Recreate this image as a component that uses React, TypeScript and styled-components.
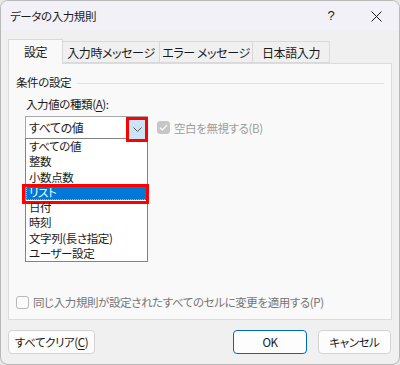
import React from "react";
import styled, { createGlobalStyle } from "styled-components";

const Global = createGlobalStyle`
  html, body { margin: 0; padding: 0; background: #e6e6e6; }
  body {
    font-family: "Noto Sans CJK JP", "Noto Sans", sans-serif;
    font-feature-settings: "palt";
    -webkit-font-smoothing: antialiased;
  }
  * { box-sizing: border-box; }
`;

const Window = styled.div`
  width: 400px;
  height: 365px;
  border: 1px solid #b9b9b9;
  border-radius: 8px;
  overflow: hidden;
  background: #f0f0f0;
  display: flex;
  flex-direction: column;
  color: #1b1b1b;
  font-size: 11.5px;
  letter-spacing: -0.4px;
  line-height: 16px;
`;

const TitleBar = styled.div`
  height: 30px;
  flex: none;
  display: flex;
  align-items: center;
  background: #f3f1f8;
  padding-left: 9px;
`;

const Title = styled.div`
  flex: 1;
  color: #1a1a1a;
`;

const CaptionButton = styled.div<{ $w: number }>`
  width: ${(p) => p.$w}px;
  height: 30px;
  display: flex;
  align-items: center;
  justify-content: center;
  font-family: "Liberation Sans", sans-serif;
  font-size: 13px;
  letter-spacing: 0;
  color: #1a1a1a;
`;

const Content = styled.div`
  flex: 1;
  display: flex;
  flex-direction: column;
  padding: 8px 7px 0 7px;
`;

const TabRow = styled.div`
  height: 24px;
  display: flex;
  align-items: flex-end;
  position: relative;
  z-index: 2;
`;

const Tab = styled.div<{ $w: number; $active?: boolean }>`
  width: ${(p) => p.$w}px;
  height: ${(p) => (p.$active ? 25 : 22)}px;
  margin-bottom: ${(p) => (p.$active ? -1 : 0)}px;
  margin-right: -1px;
  display: flex;
  align-items: center;
  justify-content: center;
  padding-top: ${(p) => (p.$active ? 0 : 1)}px;
  background: ${(p) => (p.$active ? "#f9f9f9" : "#f0f0f0")};
  border: 1px solid #d9d9d9;
  border-bottom: ${(p) => (p.$active ? "none" : "1px solid #d9d9d9")};
  font-size: 12px;
  color: #1a1a1a;
  white-space: nowrap;
  position: relative;
  z-index: ${(p) => (p.$active ? 3 : 1)};
`;

const Panel = styled.div`
  height: 257px;
  background: #f9f9f9;
  border: 1px solid #dcdcdc;
  display: flex;
  flex-direction: column;
  padding: 10px 7px 9px 7px;
  position: relative;
  z-index: 1;
`;

const GroupHeader = styled.div`
  display: flex;
  align-items: center;
  gap: 6px;
  color: #1a1a1a;
`;

const GroupLine = styled.div`
  flex: 1;
  height: 1px;
  background: #e2e2e2;
  margin-top: 2px;
`;

const Indent = styled.div`
  padding-left: 10px;
  display: flex;
  flex-direction: column;
`;

const FieldLabel = styled.div`
  margin-top: 6px;
  color: #1a1a1a;
`;

const U = styled.span`
  text-decoration: underline;
  text-underline-offset: 2px;
`;

const ComboRow = styled.div`
  margin-top: 4px;
  margin-left: -1px;
  display: flex;
  align-items: center;
  gap: 9px;
`;

const Combo = styled.div`
  width: 123px;
  height: 23px;
  border: 1px solid #a8a8a8;
  background: #ffffff;
  position: relative;
  display: flex;
  align-items: center;
  padding-left: 3px;
  color: #1a1a1a;
  font-size: 12px;
`;

const DropButton = styled.div`
  position: absolute;
  left: 100px;
  top: 0px;
  width: 22px;
  height: 25px;
  border: 3px solid #ff0000;
  background: #cce4f7;
  display: flex;
  align-items: center;
  justify-content: center;
  z-index: 4;
`;

const List = styled.div`
  position: absolute;
  left: -1px;
  top: 21px;
  width: 123px;
  border: 1px solid #828282;
  background: #ffffff;
  z-index: 3;
`;

const Item = styled.div<{ $sel?: boolean }>`
  height: 15.25px;
  line-height: 15.25px;
  font-size: 11.5px;
  padding-left: 3px;
  position: relative;
  white-space: nowrap;
  color: ${(p) => (p.$sel ? "#ffffff" : "#1a1a1a")};
  background: ${(p) => (p.$sel ? "#0078d7" : "transparent")};
  outline: ${(p) => (p.$sel ? "1px dotted #e9a65c" : "none")};
  outline-offset: -1px;
`;

const Highlight = styled.div`
  position: absolute;
  left: -4px;
  top: -1px;
  width: 127px;
  height: 20px;
  border: 3px solid #ff0000;
`;

const CheckWrap = styled.div<{ $muted: string }>`
  display: flex;
  align-items: center;
  gap: 4px;
  color: ${(p) => p.$muted};
  white-space: nowrap;
`;

const Box = styled.div<{ $checked?: boolean }>`
  width: 13px;
  height: 13px;
  border-radius: 3px;
  flex: none;
  display: flex;
  align-items: center;
  justify-content: center;
  background: ${(p) => (p.$checked ? "#c6c6c6" : "#fbfbfb")};
  border: 1px solid ${(p) => (p.$checked ? "#c6c6c6" : "#b8b8b8")};
`;

const BottomCheck = styled.div`
  margin-top: auto;
`;

const ButtonRow = styled.div`
  display: flex;
  align-items: center;
  margin-top: 10px;
  padding-right: 1px;
`;

const Button = styled.div<{ $w: number; $primary?: boolean }>`
  width: ${(p) => p.$w}px;
  height: 24px;
  border-radius: 4px;
  background: #fdfdfd;
  border: 1px solid ${(p) => (p.$primary ? "#0067c0" : "#d3d3d3")};
  display: flex;
  align-items: center;
  justify-content: center;
  color: #1a1a1a;
  white-space: nowrap;
`;

const Spacer = styled.div`
  flex: 1;
`;

const Gap = styled.div<{ $w: number }>`
  width: ${(p) => p.$w}px;
`;

const items = ["すべての値", "整数", "小数点数", "リスト", "日付", "時刻", "文字列(長さ指定)", "ユーザー設定"];

export default function App() {
  return (
    <>
      <Global />
      <Window>
        <TitleBar>
          <Title>データの入力規則</Title>
          <CaptionButton $w={44}>?</CaptionButton>
          <CaptionButton $w={46}>
            <svg width="11" height="11" viewBox="0 0 11 11">
              <path d="M0.5 0.5 L10.5 10.5 M10.5 0.5 L0.5 10.5" stroke="#1a1a1a" strokeWidth="1" fill="none" />
            </svg>
          </CaptionButton>
        </TitleBar>
        <Content>
          <TabRow>
            <Tab $w={55} $active>設定</Tab>
            <Tab $w={98}>入力時メッセージ</Tab>
            <Tab $w={94}>エラー メッセージ</Tab>
            <Tab $w={78}>日本語入力</Tab>
          </TabRow>
          <Panel>
            <GroupHeader>
              条件の設定
              <GroupLine />
            </GroupHeader>
            <Indent>
              <FieldLabel>
                入力値の種類(<U>A</U>):
              </FieldLabel>
              <ComboRow>
                <Combo>
                  すべての値
                  <DropButton>
                    <svg width="9" height="5" viewBox="0 0 9 5">
                      <path d="M0.5 0.5 L4.5 4.5 L8.5 0.5" stroke="#5a5a5a" strokeWidth="1" fill="none" />
                    </svg>
                  </DropButton>
                  <List>
                    {items.map((t) => (
                      <Item key={t} $sel={t === "リスト"}>
                        {t}
                        {t === "リスト" && <Highlight />}
                      </Item>
                    ))}
                  </List>
                </Combo>
                <CheckWrap $muted="#9d9d9d">
                  <Box $checked>
                    <svg width="9" height="7" viewBox="0 0 9 7">
                      <path d="M0.8 3.6 L3.3 6 L8.2 0.8" stroke="#ffffff" strokeWidth="1.2" fill="none" />
                    </svg>
                  </Box>
                  空白を無視する(B)
                </CheckWrap>
              </ComboRow>
            </Indent>
            <BottomCheck>
              <CheckWrap $muted="#767676">
                <Box />
                同じ入力規則が設定されたすべてのセルに変更を適用する(P)
              </CheckWrap>
            </BottomCheck>
          </Panel>
          <ButtonRow>
            <Button $w={87}>
              すべてクリア(<U>C</U>)
            </Button>
            <Spacer />
            <Button $w={74} $primary>OK</Button>
            <Gap $w={11} />
            <Button $w={73}>キャンセル</Button>
          </ButtonRow>
        </Content>
      </Window>
    </>
  );
}
